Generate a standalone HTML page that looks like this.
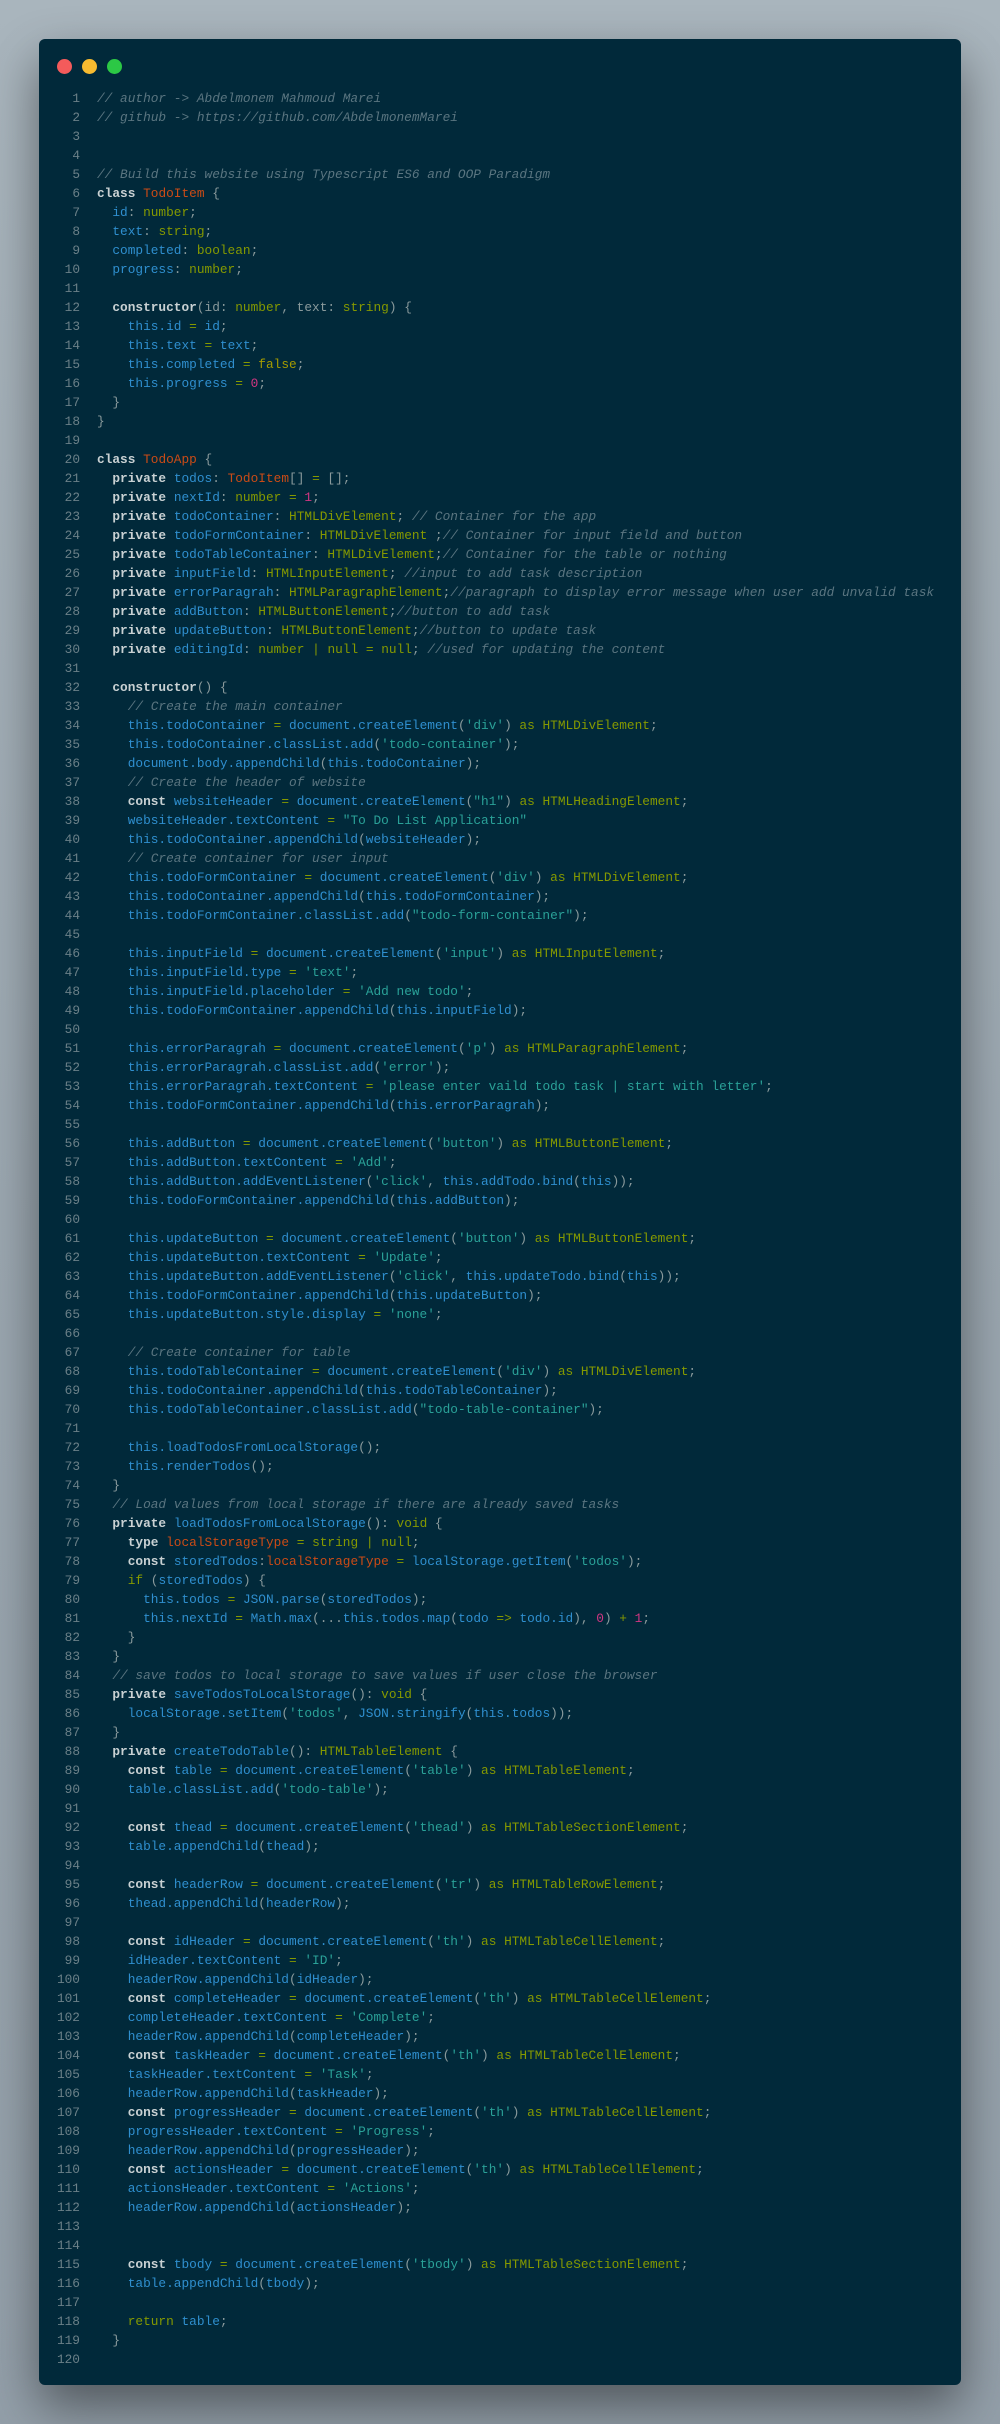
<!DOCTYPE html>
<html><head><meta charset="utf-8"><style>
html,body{margin:0;padding:0}
body{width:1000px;height:2424px;background:linear-gradient(180deg,#a9b5bd 0%,#9ba7b0 50%,#939fa9 100%);position:relative;overflow:hidden}
.win{position:absolute;left:39px;top:39px;width:922px;height:2346px;background:#01293a;border-radius:6px;box-shadow:0 22px 50px rgba(0,0,0,0.45)}
.dot{position:absolute;top:19.5px;width:15px;height:15px;border-radius:50%}
.code{position:absolute;left:0;top:49.5px;font-family:"Liberation Mono",monospace;font-size:12.8px;line-height:19px;color:#8a9a9c}
.l{height:19px;white-space:pre}
.n{display:inline-block;width:41px;text-align:right;margin-right:17px;color:#6b8088}
.c{color:#5a7580;font-style:italic}
.k{color:#c9d1d3;font-weight:bold}
.t{color:#859900}
.s{color:#2aa198}
.b{color:#2f8fcf}
.o{color:#859900}
.m{color:#d33682}
.r{color:#cb4b16}
.y{color:#a59b00}
</style></head><body>
<div class="win">
<div class="dot" style="left:17.5px;background:#f45b5b"></div>
<div class="dot" style="left:42.5px;background:#f7bb30"></div>
<div class="dot" style="left:67.5px;background:#2cc845"></div>
<div class="code">
<div class="l"><span class="n">1</span><span class="c">// author -&gt; Abdelmonem Mahmoud Marei</span></div>
<div class="l"><span class="n">2</span><span class="c">// github -&gt; https://github.com/AbdelmonemMarei</span></div>
<div class="l"><span class="n">3</span></div>
<div class="l"><span class="n">4</span></div>
<div class="l"><span class="n">5</span><span class="c">// Build this website using Typescript ES6 and OOP Paradigm</span></div>
<div class="l"><span class="n">6</span><span class="k">class</span> <span class="r">TodoItem</span> {</div>
<div class="l"><span class="n">7</span>  <span class="b">id</span>: <span class="t">number</span>;</div>
<div class="l"><span class="n">8</span>  <span class="b">text</span>: <span class="t">string</span>;</div>
<div class="l"><span class="n">9</span>  <span class="b">completed</span>: <span class="t">boolean</span>;</div>
<div class="l"><span class="n">10</span>  <span class="b">progress</span>: <span class="t">number</span>;</div>
<div class="l"><span class="n">11</span></div>
<div class="l"><span class="n">12</span>  <span class="k">constructor</span>(id: <span class="t">number</span>, text: <span class="t">string</span>) {</div>
<div class="l"><span class="n">13</span>    <span class="b">this.id</span> <span class="o">=</span> <span class="b">id</span>;</div>
<div class="l"><span class="n">14</span>    <span class="b">this.text</span> <span class="o">=</span> <span class="b">text</span>;</div>
<div class="l"><span class="n">15</span>    <span class="b">this.completed</span> <span class="o">=</span> <span class="y">false</span>;</div>
<div class="l"><span class="n">16</span>    <span class="b">this.progress</span> <span class="o">=</span> <span class="m">0</span>;</div>
<div class="l"><span class="n">17</span>  }</div>
<div class="l"><span class="n">18</span>}</div>
<div class="l"><span class="n">19</span></div>
<div class="l"><span class="n">20</span><span class="k">class</span> <span class="r">TodoApp</span> {</div>
<div class="l"><span class="n">21</span>  <span class="k">private</span> <span class="b">todos</span>: <span class="r">TodoItem</span>[] <span class="o">=</span> [];</div>
<div class="l"><span class="n">22</span>  <span class="k">private</span> <span class="b">nextId</span>: <span class="t">number</span> <span class="o">=</span> <span class="m">1</span>;</div>
<div class="l"><span class="n">23</span>  <span class="k">private</span> <span class="b">todoContainer</span>: <span class="t">HTMLDivElement</span>; <span class="c">// Container for the app</span></div>
<div class="l"><span class="n">24</span>  <span class="k">private</span> <span class="b">todoFormContainer</span>: <span class="t">HTMLDivElement</span> ;<span class="c">// Container for input field and button</span></div>
<div class="l"><span class="n">25</span>  <span class="k">private</span> <span class="b">todoTableContainer</span>: <span class="t">HTMLDivElement</span>;<span class="c">// Container for the table or nothing</span></div>
<div class="l"><span class="n">26</span>  <span class="k">private</span> <span class="b">inputField</span>: <span class="t">HTMLInputElement</span>; <span class="c">//input to add task description</span></div>
<div class="l"><span class="n">27</span>  <span class="k">private</span> <span class="b">errorParagrah</span>: <span class="t">HTMLParagraphElement</span>;<span class="c">//paragraph to display error message when user add unvalid task</span></div>
<div class="l"><span class="n">28</span>  <span class="k">private</span> <span class="b">addButton</span>: <span class="t">HTMLButtonElement</span>;<span class="c">//button to add task</span></div>
<div class="l"><span class="n">29</span>  <span class="k">private</span> <span class="b">updateButton</span>: <span class="t">HTMLButtonElement</span>;<span class="c">//button to update task</span></div>
<div class="l"><span class="n">30</span>  <span class="k">private</span> <span class="b">editingId</span>: <span class="t">number</span> <span class="o">|</span> <span class="t">null</span> <span class="o">=</span> <span class="t">null</span>; <span class="c">//used for updating the content</span></div>
<div class="l"><span class="n">31</span></div>
<div class="l"><span class="n">32</span>  <span class="k">constructor</span>() {</div>
<div class="l"><span class="n">33</span>    <span class="c">// Create the main container</span></div>
<div class="l"><span class="n">34</span>    <span class="b">this.todoContainer</span> <span class="o">=</span> <span class="b">document.createElement</span>(<span class="s">'div'</span>) <span class="t">as HTMLDivElement</span>;</div>
<div class="l"><span class="n">35</span>    <span class="b">this.todoContainer.classList.add</span>(<span class="s">'todo-container'</span>);</div>
<div class="l"><span class="n">36</span>    <span class="b">document.body.appendChild</span>(<span class="b">this.todoContainer</span>);</div>
<div class="l"><span class="n">37</span>    <span class="c">// Create the header of website</span></div>
<div class="l"><span class="n">38</span>    <span class="k">const</span> <span class="b">websiteHeader</span> <span class="o">=</span> <span class="b">document.createElement</span>(<span class="s">"h1"</span>) <span class="t">as HTMLHeadingElement</span>;</div>
<div class="l"><span class="n">39</span>    <span class="b">websiteHeader.textContent</span> <span class="o">=</span> <span class="s">"To Do List Application"</span></div>
<div class="l"><span class="n">40</span>    <span class="b">this.todoContainer.appendChild</span>(<span class="b">websiteHeader</span>);</div>
<div class="l"><span class="n">41</span>    <span class="c">// Create container for user input</span></div>
<div class="l"><span class="n">42</span>    <span class="b">this.todoFormContainer</span> <span class="o">=</span> <span class="b">document.createElement</span>(<span class="s">'div'</span>) <span class="t">as HTMLDivElement</span>;</div>
<div class="l"><span class="n">43</span>    <span class="b">this.todoContainer.appendChild</span>(<span class="b">this.todoFormContainer</span>);</div>
<div class="l"><span class="n">44</span>    <span class="b">this.todoFormContainer.classList.add</span>(<span class="s">"todo-form-container"</span>);</div>
<div class="l"><span class="n">45</span></div>
<div class="l"><span class="n">46</span>    <span class="b">this.inputField</span> <span class="o">=</span> <span class="b">document.createElement</span>(<span class="s">'input'</span>) <span class="t">as HTMLInputElement</span>;</div>
<div class="l"><span class="n">47</span>    <span class="b">this.inputField.type</span> <span class="o">=</span> <span class="s">'text'</span>;</div>
<div class="l"><span class="n">48</span>    <span class="b">this.inputField.placeholder</span> <span class="o">=</span> <span class="s">'Add new todo'</span>;</div>
<div class="l"><span class="n">49</span>    <span class="b">this.todoFormContainer.appendChild</span>(<span class="b">this.inputField</span>);</div>
<div class="l"><span class="n">50</span></div>
<div class="l"><span class="n">51</span>    <span class="b">this.errorParagrah</span> <span class="o">=</span> <span class="b">document.createElement</span>(<span class="s">'p'</span>) <span class="t">as HTMLParagraphElement</span>;</div>
<div class="l"><span class="n">52</span>    <span class="b">this.errorParagrah.classList.add</span>(<span class="s">'error'</span>);</div>
<div class="l"><span class="n">53</span>    <span class="b">this.errorParagrah.textContent</span> <span class="o">=</span> <span class="s">'please enter vaild todo task | start with letter'</span>;</div>
<div class="l"><span class="n">54</span>    <span class="b">this.todoFormContainer.appendChild</span>(<span class="b">this.errorParagrah</span>);</div>
<div class="l"><span class="n">55</span></div>
<div class="l"><span class="n">56</span>    <span class="b">this.addButton</span> <span class="o">=</span> <span class="b">document.createElement</span>(<span class="s">'button'</span>) <span class="t">as HTMLButtonElement</span>;</div>
<div class="l"><span class="n">57</span>    <span class="b">this.addButton.textContent</span> <span class="o">=</span> <span class="s">'Add'</span>;</div>
<div class="l"><span class="n">58</span>    <span class="b">this.addButton.addEventListener</span>(<span class="s">'click'</span>, <span class="b">this.addTodo.bind</span>(<span class="b">this</span>));</div>
<div class="l"><span class="n">59</span>    <span class="b">this.todoFormContainer.appendChild</span>(<span class="b">this.addButton</span>);</div>
<div class="l"><span class="n">60</span></div>
<div class="l"><span class="n">61</span>    <span class="b">this.updateButton</span> <span class="o">=</span> <span class="b">document.createElement</span>(<span class="s">'button'</span>) <span class="t">as HTMLButtonElement</span>;</div>
<div class="l"><span class="n">62</span>    <span class="b">this.updateButton.textContent</span> <span class="o">=</span> <span class="s">'Update'</span>;</div>
<div class="l"><span class="n">63</span>    <span class="b">this.updateButton.addEventListener</span>(<span class="s">'click'</span>, <span class="b">this.updateTodo.bind</span>(<span class="b">this</span>));</div>
<div class="l"><span class="n">64</span>    <span class="b">this.todoFormContainer.appendChild</span>(<span class="b">this.updateButton</span>);</div>
<div class="l"><span class="n">65</span>    <span class="b">this.updateButton.style.display</span> <span class="o">=</span> <span class="s">'none'</span>;</div>
<div class="l"><span class="n">66</span></div>
<div class="l"><span class="n">67</span>    <span class="c">// Create container for table</span></div>
<div class="l"><span class="n">68</span>    <span class="b">this.todoTableContainer</span> <span class="o">=</span> <span class="b">document.createElement</span>(<span class="s">'div'</span>) <span class="t">as HTMLDivElement</span>;</div>
<div class="l"><span class="n">69</span>    <span class="b">this.todoContainer.appendChild</span>(<span class="b">this.todoTableContainer</span>);</div>
<div class="l"><span class="n">70</span>    <span class="b">this.todoTableContainer.classList.add</span>(<span class="s">"todo-table-container"</span>);</div>
<div class="l"><span class="n">71</span></div>
<div class="l"><span class="n">72</span>    <span class="b">this.loadTodosFromLocalStorage</span>();</div>
<div class="l"><span class="n">73</span>    <span class="b">this.renderTodos</span>();</div>
<div class="l"><span class="n">74</span>  }</div>
<div class="l"><span class="n">75</span>  <span class="c">// Load values from local storage if there are already saved tasks</span></div>
<div class="l"><span class="n">76</span>  <span class="k">private</span> <span class="b">loadTodosFromLocalStorage</span>(): <span class="t">void</span> {</div>
<div class="l"><span class="n">77</span>    <span class="k">type</span> <span class="r">localStorageType</span> <span class="o">=</span> <span class="t">string</span> <span class="o">|</span> <span class="t">null</span>;</div>
<div class="l"><span class="n">78</span>    <span class="k">const</span> <span class="b">storedTodos</span>:<span class="r">localStorageType</span> <span class="o">=</span> <span class="b">localStorage.getItem</span>(<span class="s">'todos'</span>);</div>
<div class="l"><span class="n">79</span>    <span class="t">if</span> (<span class="b">storedTodos</span>) {</div>
<div class="l"><span class="n">80</span>      <span class="b">this.todos</span> <span class="o">=</span> <span class="b">JSON.parse</span>(<span class="b">storedTodos</span>);</div>
<div class="l"><span class="n">81</span>      <span class="b">this.nextId</span> <span class="o">=</span> <span class="b">Math.max</span>(...<span class="b">this.todos.map</span>(<span class="b">todo</span> <span class="o">=&gt;</span> <span class="b">todo.id</span>), <span class="m">0</span>) <span class="o">+</span> <span class="m">1</span>;</div>
<div class="l"><span class="n">82</span>    }</div>
<div class="l"><span class="n">83</span>  }</div>
<div class="l"><span class="n">84</span>  <span class="c">// save todos to local storage to save values if user close the browser</span></div>
<div class="l"><span class="n">85</span>  <span class="k">private</span> <span class="b">saveTodosToLocalStorage</span>(): <span class="t">void</span> {</div>
<div class="l"><span class="n">86</span>    <span class="b">localStorage.setItem</span>(<span class="s">'todos'</span>, <span class="b">JSON.stringify</span>(<span class="b">this.todos</span>));</div>
<div class="l"><span class="n">87</span>  }</div>
<div class="l"><span class="n">88</span>  <span class="k">private</span> <span class="b">createTodoTable</span>(): <span class="t">HTMLTableElement</span> {</div>
<div class="l"><span class="n">89</span>    <span class="k">const</span> <span class="b">table</span> <span class="o">=</span> <span class="b">document.createElement</span>(<span class="s">'table'</span>) <span class="t">as HTMLTableElement</span>;</div>
<div class="l"><span class="n">90</span>    <span class="b">table.classList.add</span>(<span class="s">'todo-table'</span>);</div>
<div class="l"><span class="n">91</span></div>
<div class="l"><span class="n">92</span>    <span class="k">const</span> <span class="b">thead</span> <span class="o">=</span> <span class="b">document.createElement</span>(<span class="s">'thead'</span>) <span class="t">as HTMLTableSectionElement</span>;</div>
<div class="l"><span class="n">93</span>    <span class="b">table.appendChild</span>(<span class="b">thead</span>);</div>
<div class="l"><span class="n">94</span></div>
<div class="l"><span class="n">95</span>    <span class="k">const</span> <span class="b">headerRow</span> <span class="o">=</span> <span class="b">document.createElement</span>(<span class="s">'tr'</span>) <span class="t">as HTMLTableRowElement</span>;</div>
<div class="l"><span class="n">96</span>    <span class="b">thead.appendChild</span>(<span class="b">headerRow</span>);</div>
<div class="l"><span class="n">97</span></div>
<div class="l"><span class="n">98</span>    <span class="k">const</span> <span class="b">idHeader</span> <span class="o">=</span> <span class="b">document.createElement</span>(<span class="s">'th'</span>) <span class="t">as HTMLTableCellElement</span>;</div>
<div class="l"><span class="n">99</span>    <span class="b">idHeader.textContent</span> <span class="o">=</span> <span class="s">'ID'</span>;</div>
<div class="l"><span class="n">100</span>    <span class="b">headerRow.appendChild</span>(<span class="b">idHeader</span>);</div>
<div class="l"><span class="n">101</span>    <span class="k">const</span> <span class="b">completeHeader</span> <span class="o">=</span> <span class="b">document.createElement</span>(<span class="s">'th'</span>) <span class="t">as HTMLTableCellElement</span>;</div>
<div class="l"><span class="n">102</span>    <span class="b">completeHeader.textContent</span> <span class="o">=</span> <span class="s">'Complete'</span>;</div>
<div class="l"><span class="n">103</span>    <span class="b">headerRow.appendChild</span>(<span class="b">completeHeader</span>);</div>
<div class="l"><span class="n">104</span>    <span class="k">const</span> <span class="b">taskHeader</span> <span class="o">=</span> <span class="b">document.createElement</span>(<span class="s">'th'</span>) <span class="t">as HTMLTableCellElement</span>;</div>
<div class="l"><span class="n">105</span>    <span class="b">taskHeader.textContent</span> <span class="o">=</span> <span class="s">'Task'</span>;</div>
<div class="l"><span class="n">106</span>    <span class="b">headerRow.appendChild</span>(<span class="b">taskHeader</span>);</div>
<div class="l"><span class="n">107</span>    <span class="k">const</span> <span class="b">progressHeader</span> <span class="o">=</span> <span class="b">document.createElement</span>(<span class="s">'th'</span>) <span class="t">as HTMLTableCellElement</span>;</div>
<div class="l"><span class="n">108</span>    <span class="b">progressHeader.textContent</span> <span class="o">=</span> <span class="s">'Progress'</span>;</div>
<div class="l"><span class="n">109</span>    <span class="b">headerRow.appendChild</span>(<span class="b">progressHeader</span>);</div>
<div class="l"><span class="n">110</span>    <span class="k">const</span> <span class="b">actionsHeader</span> <span class="o">=</span> <span class="b">document.createElement</span>(<span class="s">'th'</span>) <span class="t">as HTMLTableCellElement</span>;</div>
<div class="l"><span class="n">111</span>    <span class="b">actionsHeader.textContent</span> <span class="o">=</span> <span class="s">'Actions'</span>;</div>
<div class="l"><span class="n">112</span>    <span class="b">headerRow.appendChild</span>(<span class="b">actionsHeader</span>);</div>
<div class="l"><span class="n">113</span></div>
<div class="l"><span class="n">114</span></div>
<div class="l"><span class="n">115</span>    <span class="k">const</span> <span class="b">tbody</span> <span class="o">=</span> <span class="b">document.createElement</span>(<span class="s">'tbody'</span>) <span class="t">as HTMLTableSectionElement</span>;</div>
<div class="l"><span class="n">116</span>    <span class="b">table.appendChild</span>(<span class="b">tbody</span>);</div>
<div class="l"><span class="n">117</span></div>
<div class="l"><span class="n">118</span>    <span class="t">return</span> <span class="b">table</span>;</div>
<div class="l"><span class="n">119</span>  }</div>
<div class="l"><span class="n">120</span></div>
</div>
</div>
</body></html>
